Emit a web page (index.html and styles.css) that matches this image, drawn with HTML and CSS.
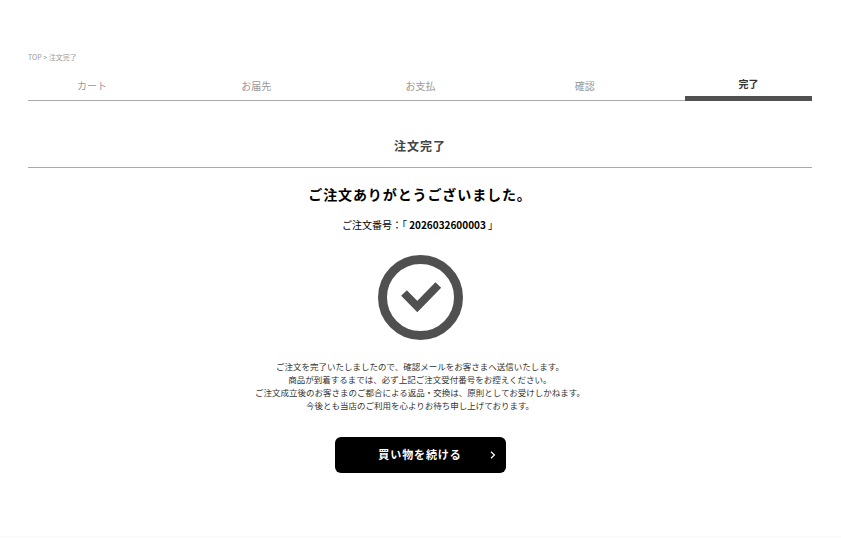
FILE: index.html
```html
<!DOCTYPE html>
<html lang="ja">
<head>
    <meta charset="UTF-8">
    <title>注文完了</title>
    <link rel="stylesheet" href="styles.css">
</head>
<body>
    <div class="container">
        <p class="breadcrumb">TOP &gt; 注文完了</p>
        <ul class="steps">
            <li class="step">カート</li>
            <li class="step">お届先</li>
            <li class="step">お支払</li>
            <li class="step">確認</li>
            <li class="step active">完了</li>
        </ul>
        <h1 class="page-title">注文完了</h1>
        <div class="complete">
            <h2 class="thanks">ご注文ありがとうございました。</h2>
            <p class="order-no">ご注文番号：「 <b>2026032600003</b> 」</p>
            <svg class="check" width="86" height="86" viewBox="0 0 86 86">
                <circle cx="43.5" cy="43.5" r="38" fill="none" stroke="#505050" stroke-width="9"></circle>
                <path d="M27 39L40.3 52.5L61.3 31" fill="none" stroke="#505050" stroke-width="8"></path>
            </svg>
            <p class="message">
                ご注文を完了いたしましたので、確認メールをお客さまへ送信いたします。<br>
                商品が到着するまでは、必ず上記ご注文受付番号をお控えください。<br>
                ご注文成立後のお客さまのご都合による返品・交換は、原則としてお受けしかねます。<br>
                今後とも当店のご利用を心よりお待ち申し上げております。
            </p>
            <a class="btn" href="#">買い物を続ける
                <svg class="btn-arrow" width="6" height="8" viewBox="0 0 6 8">
                    <path d="M1 0.8L4.4 4L1 7.2" fill="none" stroke="#fff" stroke-width="1.2"></path>
                </svg>
            </a>
        </div>
    </div>
    <div class="footer-line"></div>
</body>
</html>
```

FILE: styles.css
```css
* {
    box-sizing: border-box;
}

body {
    font-family: "Noto Sans CJK JP", "Noto Sans", sans-serif;
    margin: 0;
    background-color: #fff;
    color: #000;
}

.container {
    padding: 51px 29px 0 28px;
    height: 536px;
}

.breadcrumb {
    margin: 0;
    font-size: 7px;
    line-height: 12px;
    color: #999;
}

.steps {
    display: flex;
    justify-content: space-between;
    list-style: none;
    margin: 9px 0 0;
    padding: 0;
    height: 29px;
    border-bottom: 1px solid #aaa;
}

.step {
    width: 128px;
    text-align: center;
    font-size: 10px;
    line-height: 28px;
    color: #999;
}

.step.active {
    width: 127px;
    color: #333;
    font-weight: bold;
    line-height: 24px;
    height: 29px;
    border-bottom: 5px solid #505050;
}

.page-title {
    margin: 0;
    height: 67px;
    padding-top: 36px;
    border-bottom: 1px solid #aaa;
    text-align: center;
    font-size: 12px;
    line-height: 18px;
    letter-spacing: 1px;
    color: #444;
}

.complete {
    display: flex;
    flex-direction: column;
    align-items: center;
}

.thanks {
    margin: 16px 0 0;
    font-size: 14px;
    line-height: 20px;
    letter-spacing: 0.9px;
}

.order-no {
    margin: 13px 0 0;
    font-size: 10px;
    line-height: 16px;
}

.check {
    margin-top: 21px;
}

.message {
    margin: 20px 0 0;
    font-size: 8.5px;
    line-height: 13px;
    text-align: center;
    color: #333;
}

.btn {
    display: flex;
    align-items: center;
    justify-content: center;
    position: relative;
    width: 171px;
    height: 36px;
    margin-top: 25px;
    padding-bottom: 2px;
    border-radius: 6px;
    background-color: #000;
    color: #fff;
    font-size: 11px;
    font-weight: bold;
    letter-spacing: 0.9px;
    text-decoration: none;
}

.btn-arrow {
    position: absolute;
    right: 10px;
    top: 14px;
}

.footer-line {
    height: 2px;
    background-color: #fafafa;
}
```
